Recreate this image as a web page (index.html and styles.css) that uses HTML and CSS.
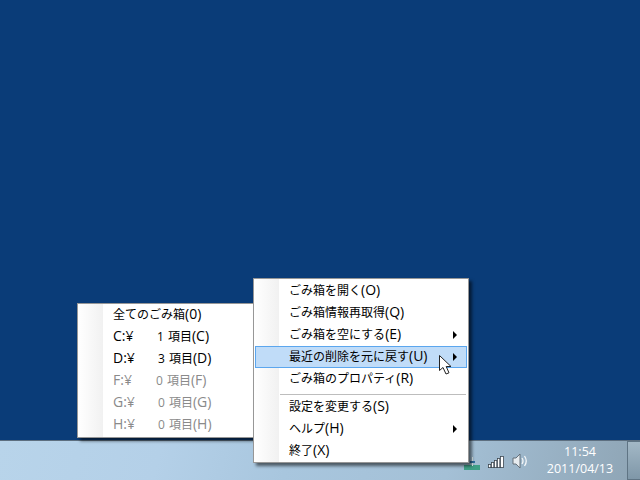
FILE: index.html
```html
<!DOCTYPE html>
<html lang="ja">
<head>
  <meta charset="UTF-8">
  <title>ごみ箱</title>
  <link rel="stylesheet" href="styles.css">
</head>
<body>

<div class="desktop">
  <ul class="menu drives">
    <li class="item">全てのごみ箱<span class="key">(0)</span></li>
    <li class="item"><span class="drive key">C:¥</span>1 項目<span class="key">(C)</span></li>
    <li class="item"><span class="drive key wide">D:¥</span>3 項目<span class="key">(D)</span></li>
    <li class="item off"><span class="drive key narrow">F:¥</span>0 項目<span class="key">(F)</span></li>
    <li class="item off"><span class="drive key wide">G:¥</span>0 項目<span class="key">(G)</span></li>
    <li class="item off"><span class="drive key wide">H:¥</span>0 項目<span class="key">(H)</span></li>
  </ul>

  <ul class="menu main">
    <li class="item">ごみ箱を開く<span class="key">(O)</span></li>
    <li class="item">ごみ箱情報再取得<span class="key">(Q)</span></li>
    <li class="item sub">ごみ箱を空にする<span class="key">(E)</span></li>
    <li class="item sub hover">最近の削除を元に戻す<span class="key">(U)</span></li>
    <li class="item">ごみ箱のプロパティ<span class="key">(R)</span></li>
    <li class="sep"></li>
    <li class="item">設定を変更する<span class="key">(S)</span></li>
    <li class="item sub">ヘルプ<span class="key">(H)</span></li>
    <li class="item">終了<span class="key">(X)</span></li>
  </ul>

  <svg class="cursor" width="15" height="20" viewBox="0 0 15 20">
    <path d="M1.5 .5V15.5L5 12.5L8 19L11 17.8L8.2 11.5H13Z" fill="#fff" stroke="#222"/>
  </svg>
</div>

<div class="taskbar">
  <div class="tray">
    <svg class="tray-app" width="16" height="13" viewBox="0 0 16 13">
      <rect x="0" y="8" width="16" height="5" fill="#3f9f86"/>
      <rect x="8" y="0" width="1" height="9" fill="#e8f4f4"/>
      <rect x="6" y="4" width="5" height="2" fill="#2f6f9f"/>
    </svg>
    <svg class="signal" width="16" height="12" viewBox="0 0 16 12">
      <g fill="#fff" stroke="#3c4650" stroke-width=".8">
        <rect x=".4" y="8.4" width="2.4" height="3.2"/>
        <rect x="3.4" y="6.4" width="2.4" height="5.2"/>
        <rect x="6.4" y="4.4" width="2.4" height="7.2"/>
        <rect x="9.4" y="2.4" width="2.4" height="9.2"/>
        <rect x="12.4" y=".4" width="3" height="11.2"/>
      </g>
    </svg>
    <svg class="speaker" width="16" height="16" viewBox="0 0 16 16">
      <path d="M1 5H4L8 1V15L4 11H1Z" fill="#e6ebef" stroke="#5c6670" stroke-width=".9"/>
      <path d="M10 5Q12 8 10 11M12.5 3Q16 8 12.5 13" fill="none" stroke="#f5f7f9" stroke-width="1.3"/>
    </svg>
  </div>
  <div class="clock">
    <span>11:54</span>
    <span>2011/04/13</span>
  </div>
  <div class="show-desktop"></div>
</div>

</body>
</html>
```

FILE: styles.css
```css
* { box-sizing: border-box; }
html, body { margin: 0; height: 100%; overflow: hidden; }
body {
  display: flex; flex-direction: column;
  font-family: "Open Sans", "Noto Sans CJK JP", sans-serif;
  font-size: 12px; color: #000;
}

.desktop { flex: 1; position: relative; background: #0a3c78; }

.menu {
  position: absolute; margin: 0; list-style: none;
  background: #fff; border: 1px solid #979797;
  box-shadow: 3px 3px 3px rgba(0, 0, 0, .55);
  z-index: 1;
}
.main { left: 253px; top: 278px; width: 216px; padding: 1px 1px 0; z-index: 2; }
.drives { left: 77px; top: 303px; width: 177px; padding: 0 1px 1px; }
.menu::before {
  content: ""; position: absolute; left: 0; top: 0; bottom: 0; width: 25px;
  background: linear-gradient(to right, #fff, #f1f1f1);
  z-index: -1;
}

.item {
  height: 22px; line-height: 19px; white-space: nowrap; word-spacing: 1px;
  border: 1px solid transparent; position: relative;
}
.main .item { padding-left: 33px; }
.drives .item { padding-left: 33px; }
.key { font-size: 14px; line-height: 1; }
.off { color: #8a8a8a; }
.hover { background: #c0dcf8; border-color: #5ba6ee; }
.sub::after {
  content: ""; position: absolute; right: 9px; top: 6px;
  border-left: 4px solid #000;
  border-top: 4px solid transparent; border-bottom: 4px solid transparent;
}
.sep { height: 1px; margin: 4px 1px 1px 25px; background: #bdbdbd; }

.drive { display: inline-block; width: 44px; }
.drive.wide { width: 45px; }
.drive.narrow { width: 43px; }

.cursor { position: absolute; left: 438px; top: 355px; z-index: 3; }

.taskbar {
  height: 40px; display: flex; align-items: stretch;
  border-top: 1px solid #5d6f80;
  background: linear-gradient(105deg, #b8d4ea 0, #b4d0e8 25%, #a8c6de 45%, #a4c0d6 70%, #8ea4b4 100%);
  color: #fff;
}
.tray {
  margin-left: auto; display: flex; align-items: center;
  gap: 8px; padding: 0 5px 0 0;
}
.tray-app { margin: 5px 0 0; }
.signal { margin-top: 2px; }
.clock {
  width: 94px; display: flex; flex-direction: column; align-items: center;
  justify-content: center; line-height: 17px; font-size: 12.5px;
  padding-bottom: 1px;
}
.show-desktop {
  width: 13px; background: linear-gradient(#a3b8c6, #7f97a8);
  border: 1px solid #5f7484; border-right: none;
}
```
